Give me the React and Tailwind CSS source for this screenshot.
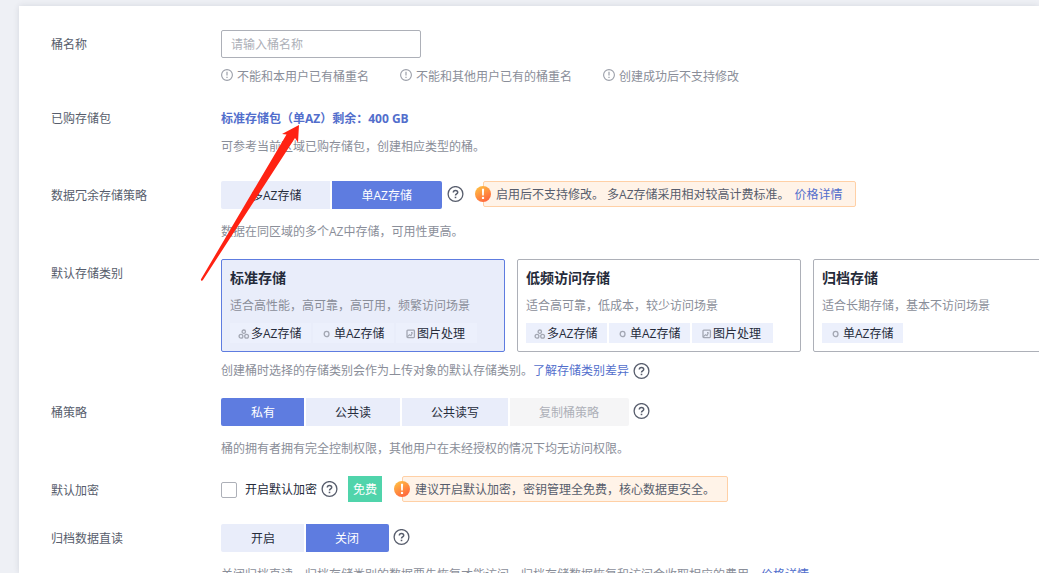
import { useState } from "react";

const REDUNDANCY_OPTIONS = [
  { value: "multi", label: "多AZ存储" },
  { value: "single", label: "单AZ存储" },
];

const POLICY_OPTIONS = [
  { value: "private", label: "私有" },
  { value: "read", label: "公共读" },
  { value: "write", label: "公共读写" },
  { value: "copy", label: "复制桶策略", disabled: true },
];

const ARCHIVE_OPTIONS = [
  { value: "on", label: "开启" },
  { value: "off", label: "关闭" },
];

const NAME_HINTS = ["不能和本用户已有桶重名", "不能和其他用户已有的桶重名", "创建成功后不支持修改"];

const STORAGE_CLASSES = [
  {
    value: "standard",
    title: "标准存储",
    desc: "适合高性能，高可靠，高可用，频繁访问场景",
    tags: ["multi", "single", "image"],
  },
  {
    value: "warm",
    title: "低频访问存储",
    desc: "适合高可靠，低成本，较少访问场景",
    tags: ["multi", "single", "image"],
  },
  {
    value: "cold",
    title: "归档存储",
    desc: "适合长期存储，基本不访问场景",
    tags: ["single"],
  },
];

const TAG_LABELS = { multi: "多AZ存储", single: "单AZ存储", image: "图片处理" };

function TagIcon({ type }) {
  return (
    <svg className="h-3 w-[14px] shrink-0" viewBox="0 0 14 12" fill="none" stroke="#a3a7b3" strokeWidth="1.3" aria-hidden>
      {type === "multi" && (
        <>
          <circle cx="6.8" cy="3.7" r="1.7" />
          <circle cx="4" cy="8.2" r="1.9" />
          <circle cx="9.6" cy="8.2" r="1.9" />
        </>
      )}
      {type === "single" && <ellipse cx="6.600" cy="6" rx="2.400" ry="2.700" />}
      {type === "image" && (
        <>
          <rect x="4" y="2.200" width="7.400" height="7.400" rx="0.800" />
          <path d="M4.200 8.700 6.600 6.800l1.400.9 1.400-3M8 4.600h1.600" strokeWidth="1.100" />
        </>
      )}
    </svg>
  );
}

function HelpButton({ label }) {
  return (
    <button type="button" aria-label={label} className="flex h-[26px] shrink-0 items-center">
      <svg className="h-[17px] w-[17px]" viewBox="0 0 17 17" fill="none" stroke="#575d6c" aria-hidden>
        <circle cx="8.5" cy="8" r="7.4" strokeWidth="1.3" />
        <path d="M6.3 6.6c0-1.300.9-2.200 2.200-2.200 1.200 0 2.200.8 2.200 2 0 1.500-2.200 1.600-2.200 3.200" strokeWidth="1.500" />
        <path d="M8.500 10.700v1.500" strokeWidth="1.600" />
      </svg>
    </button>
  );
}

function Segmented({ options, value, onChange, label }) {
  return (
    <div role="group" aria-label={label} className="flex gap-[2px] overflow-hidden rounded-[2px]">
      {options.map((opt) => {
        let tone = "bg-[#e9edfa] text-[#252b3a]";
        if (opt.disabled) tone = "bg-[#f5f5f6] text-[#adb0b8]";
        else if (opt.value === value) tone = "bg-[#5e7ce0] text-white";
        return (
          <button
            key={opt.value}
            type="button"
            disabled={opt.disabled}
            aria-pressed={opt.value === value}
            onClick={() => onChange(opt.value)}
            className={`h-7 px-[29px] pt-[2px] whitespace-nowrap first:pl-[30px] last:pr-[30px] ${tone}`}
          >
            {opt.label}
          </button>
        );
      })}
    </div>
  );
}

function Notice({ children }) {
  return (
    <div className="relative flex h-[26px] items-center rounded-[2px] border border-[#ffd0a6] bg-[#fff3e8] px-3 pt-[2px] whitespace-nowrap text-[#575d6c]">
      <svg className="absolute top-1 -left-[9px] h-4 w-4" viewBox="0 0 16 16" aria-hidden>
        <defs>
          <linearGradient id="notice-fill" x1="0.2" y1="0" x2="0.8" y2="1">
            <stop offset="0" stopColor="#ffbf43" />
            <stop offset="1" stopColor="#ff5f3c" />
          </linearGradient>
        </defs>
        <circle cx="8" cy="8" r="8" fill="url(#notice-fill)" />
        <path d="M6.900 2.800h2.200l-.3 6.600H7.200z" fill="#fff" />
        <circle cx="8" cy="11.900" r="1.200" fill="#fff" />
      </svg>
      {children}
    </div>
  );
}

function StorageCard({ item, selected, onSelect }) {
  return (
    <button
      type="button"
      aria-pressed={selected}
      onClick={onSelect}
      className={`w-[284px] shrink-0 rounded-[2px] border p-2 text-left ${
        selected ? "border-[#5e7ce0] bg-[#e9edfa]" : "border-[#adb0b8] bg-white"
      }`}
    >
      <div className="text-sm leading-5 font-bold text-[#252b3a]">{item.title}</div>
      <div className="mt-2 leading-5 text-[#8a8e99]">{item.desc}</div>
      <div className="mt-[7px] flex gap-[2px]">
        {item.tags.map((tag) => (
          <span key={tag} className="flex h-5 w-[81px] items-center bg-[#ecf0fc] pt-[2px] pl-[7px] text-[#252b3a]">
            <TagIcon type={tag} />
            {TAG_LABELS[tag]}
          </span>
        ))}
      </div>
    </button>
  );
}

function Row({ label, htmlFor, className = "mb-4", children }) {
  return (
    <div className={`flex ${className}`}>
      {htmlFor ? (
        <label htmlFor={htmlFor} className="w-[170px] shrink-0 leading-[30px] text-[#575d6c]">
          {label}
        </label>
      ) : (
        <div className="h-7 w-[170px] shrink-0 leading-[30px] text-[#575d6c]">{label}</div>
      )}
      <div className="min-w-0 flex-1">{children}</div>
    </div>
  );
}

function App() {
  const [name, setName] = useState("");
  const [redundancy, setRedundancy] = useState("single");
  const [storageClass, setStorageClass] = useState("standard");
  const [policy, setPolicy] = useState("private");
  const [encrypt, setEncrypt] = useState(false);
  const [archive, setArchive] = useState("off");

  return (
    <div className="relative flex h-screen overflow-hidden bg-[#eef0f5] pt-[6px] pl-[19px] font-['Open_Sans','Noto_Sans_CJK_SC',sans-serif] text-xs">
      <main className="min-w-0 flex-1 bg-white pt-6 pl-8 shadow-[0_0_6px_rgba(37,43,58,0.12)]">
        <Row label="桶名称" htmlFor="bucket-name">
          <input
            id="bucket-name"
            type="text"
            value={name}
            onChange={(e) => setName(e.target.value)}
            placeholder="请输入桶名称"
            className="block h-7 w-[200px] rounded-[2px] border border-[#adb0b8] px-[9px] text-[#252b3a] outline-none placeholder:text-[#adb0b8] focus:border-[#5e7ce0]"
          />
          <ul className="mt-2 flex gap-[31px] leading-[22px] whitespace-nowrap text-[#8a8e99]">
            {NAME_HINTS.map((hint) => (
              <li key={hint} className="flex gap-1">
                <svg className="mt-[3px] h-3 w-3" viewBox="0 0 12 12" fill="none" stroke="#9b9fa9" aria-hidden>
                  <circle cx="6" cy="6" r="5.400" strokeWidth="1.100" />
                  <path d="M6 2.800v3.800M6 7.800v1.300" strokeWidth="1.200" />
                </svg>
                {hint}
              </li>
            ))}
          </ul>
        </Row>

        <Row label="已购存储包" className="mb-[23px]">
          <div className="leading-[30px] font-bold text-[#526ecc]">标准存储包（单AZ）剩余：400 GB</div>
          <p className="mt-[2px] leading-[22px] text-[#8a8e99]">可参考当前区域已购存储包，创建相应类型的桶。</p>
        </Row>

        <Row label="数据冗余存储策略">
          <div className="flex items-start">
            <Segmented
              label="数据冗余存储策略"
              options={REDUNDANCY_OPTIONS}
              value={redundancy}
              onChange={setRedundancy}
            />
            <div className="ml-[5px] flex gap-[19px]">
              <HelpButton label="数据冗余存储策略说明" />
              <Notice>
                <span>启用后不支持修改。 多AZ存储采用相对较高计费标准。</span>
                <a href="#price" className="ml-[5px] text-[#526ecc]">
                  价格详情
                </a>
              </Notice>
            </div>
          </div>
          <p className="mt-3 leading-[22px] text-[#8a8e99]">数据在同区域的多个AZ中存储，可用性更高。</p>
        </Row>

        <Row label="默认存储类别">
          <div className="flex gap-3">
            {STORAGE_CLASSES.map((item) => (
              <StorageCard
                key={item.value}
                item={item}
                selected={item.value === storageClass}
                onSelect={() => setStorageClass(item.value)}
              />
            ))}
          </div>
          <div className="mt-2 flex h-[22px] items-center leading-[22px] text-[#8a8e99]">
            <span>创建桶时选择的存储类别会作为上传对象的默认存储类别。</span>
            <a href="#storage-class" className="mr-1 text-[#526ecc]">
              了解存储类别差异
            </a>
            <HelpButton label="存储类别说明" />
          </div>
        </Row>

        <Row label="桶策略">
          <div className="flex items-start gap-1">
            <Segmented label="桶策略" options={POLICY_OPTIONS} value={policy} onChange={setPolicy} />
            <HelpButton label="桶策略说明" />
          </div>
          <p className="mt-3 leading-[22px] text-[#8a8e99]">
            桶的拥有者拥有完全控制权限，其他用户在未经授权的情况下均无访问权限。
          </p>
        </Row>

        <Row label="默认加密" className="mb-5">
          <div className="flex h-7 items-start">
            <label className="flex h-7 items-center gap-2 leading-[30px] text-[#252b3a]">
              <input
                type="checkbox"
                checked={encrypt}
                onChange={(e) => setEncrypt(e.target.checked)}
                className="h-4 w-4 appearance-none rounded-[2px] border border-[#adb0b8] bg-white checked:border-[#5e7ce0] checked:bg-[#5e7ce0]"
              />
              开启默认加密
            </label>
            <div className="ml-1 flex">
              <HelpButton label="默认加密说明" />
              <span className="mr-5 ml-[10px] flex h-[26px] items-center bg-[#50d4ab] px-[5px] pt-[2px] text-white">
                免费
              </span>
              <Notice>建议开启默认加密，密钥管理全免费，核心数据更安全。</Notice>
            </div>
          </div>
        </Row>

        <Row label="归档数据直读">
          <div className="flex items-start gap-1">
            <Segmented label="归档数据直读" options={ARCHIVE_OPTIONS} value={archive} onChange={setArchive} />
            <HelpButton label="归档数据直读说明" />
          </div>
          <p className="mt-3 leading-[22px] text-[#8a8e99]">
            关闭归档直读，归档存储类别的数据要先恢复才能访问。归档存储数据恢复和访问会收取相应的费用。
            <a href="#price" className="text-[#526ecc]">
              价格详情
            </a>
          </p>
        </Row>
      </main>

      {/* pointer to the remaining package quota */}
      <svg
        className="pointer-events-none absolute top-[125px] left-[200px] h-[157px] w-[100px]"
        viewBox="0 0 100 157"
        fill="#ff2212"
        aria-hidden
      >
        <path d="M99 0 82 9 86.500 9.500 0.800 154.500 1.500 156 2.800 155.200 95 13 98 17.500Z" />
      </svg>
    </div>
  );
}

export default App;
